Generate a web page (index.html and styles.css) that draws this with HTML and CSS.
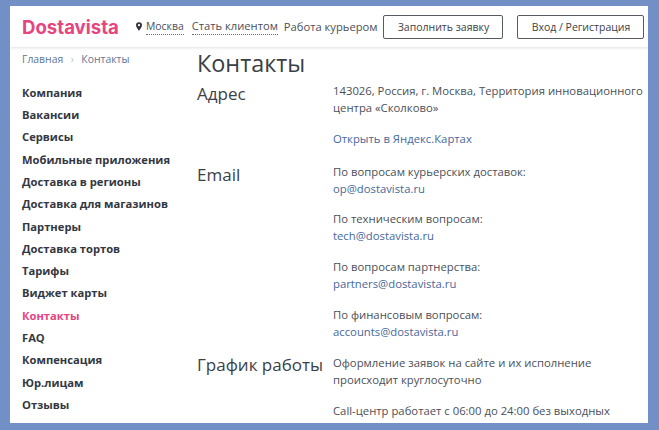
FILE: index.html
```html
<!DOCTYPE html>
<html lang="ru">
<head>
<meta charset="utf-8">
<title>Контакты</title>
<link rel="stylesheet" href="styles.css">
</head>
<body>
<div class="window">
  <header class="header">
    <a class="logo">Dostavista</a>
    <svg class="pin" width="6" height="9" viewBox="0 0 7 10"><path fill-rule="evenodd" d="M3.5 0A3.4 3.4 0 0 0 0 3.4C0 5.6 3.5 10 3.5 10S7 5.6 7 3.4A3.4 3.4 0 0 0 3.5 0Zm0 2.1a1.3 1.3 0 1 1 0 2.6 1.3 1.3 0 0 1 0-2.6Z" fill="#33373f"/></svg>
    <a class="hlink dotted city">Москва</a>
    <a class="hlink dotted client">Стать клиентом</a>
    <a class="hlink courier">Работа курьером</a>
    <a class="btn btn-order">Заполнить заявку</a>
    <a class="btn btn-login">Вход / Регистрация</a>
  </header>
  <div class="page">
    <aside class="side">
      <div class="crumbs"><span>Главная</span><span class="sep">›</span><span>Контакты</span></div>
      <nav class="nav">
        <a>Компания</a>
        <a>Вакансии</a>
        <a>Сервисы</a>
        <a>Мобильные приложения</a>
        <a>Доставка в регионы</a>
        <a>Доставка для магазинов</a>
        <a>Партнеры</a>
        <a>Доставка тортов</a>
        <a>Тарифы</a>
        <a>Виджет карты</a>
        <a class="active">Контакты</a>
        <a>FAQ</a>
        <a>Компенсация</a>
        <a>Юр.лицам</a>
        <a>Отзывы</a>
      </nav>
    </aside>
    <main class="main">
      <h1 class="title">Контакты</h1>
      <section class="row row-address">
        <h2 class="label">Адрес</h2>
        <div class="info">
          <p>143026, Россия, г. Москва, Территория инновационного центра «Сколково»</p>
          <p><a class="link">Открыть в Яндекс.Картах</a></p>
        </div>
      </section>
      <section class="row row-email">
        <h2 class="label">Email</h2>
        <div class="info">
          <p>По вопросам курьерских доставок:<br><a class="link">op@dostavista.ru</a></p>
          <p>По техническим вопросам:<br><a class="link">tech@dostavista.ru</a></p>
          <p>По вопросам партнерства:<br><a class="link">partners@dostavista.ru</a></p>
          <p>По финансовым вопросам:<br><a class="link">accounts@dostavista.ru</a></p>
        </div>
      </section>
      <section class="row row-hours">
        <h2 class="label">График работы</h2>
        <div class="info">
          <p>Оформление заявок на сайте и их исполнение происходит круглосуточно</p>
          <p>Call-центр работает с 06:00 до 24:00 без выходных</p>
        </div>
      </section>
    </main>
  </div>
</div>
</body>
</html>
```
FILE: styles.css
```css
* { box-sizing: border-box; }
html, body { margin: 0; height: 100%; overflow: hidden; }
body {
  background: #7390c6;
  padding: 6px 11px 7px 10px;
  font-family: "Open Sans", sans-serif;
  color: #3b3f47;
}
.window { background: #fff; height: 417px; overflow: hidden; }
.header {
  display: flex;
  align-items: center;
  height: 41px;
  padding-left: 12px;
  box-shadow: 0 1px 3px rgba(0, 0, 0, .12);
  position: relative;
}
.logo {
  font-family: "Inter", sans-serif;
  font-weight: 700;
  font-size: 18.6px;
  color: #e6457f;
  width: 114px;
}
.pin { margin-right: 4px; }
.hlink { font-size: 11.2px; line-height: 16px; color: #4b4f58; white-space: nowrap; }
.dotted { border-bottom: 1px dotted #666b75; }
.city { font-size: 10.4px; margin-right: 8px; }
.client { margin-right: 6px; }
.courier { margin-right: 6px; }
.btn {
  display: flex;
  align-items: center;
  justify-content: center;
  height: 24px;
  border: 1px solid #555a63;
  border-radius: 2px;
  font-size: 10.5px;
  color: #3b3f47;
  white-space: nowrap;
}
.btn-order { width: 120px; margin-right: 14px; }
.btn-login { width: 127px; }
.page { display: flex; padding: 0 0 0 12px; }
.side { width: 175px; flex: none; }
.crumbs {
  display: flex;
  gap: 7.5px;
  padding-top: 5px;
  height: 34.8px;
  font-size: 10.4px;
  line-height: 15px;
  color: #5f7596;
}
.sep { color: #b9c0cc; }
.nav { display: flex; flex-direction: column; }
.nav a {
  font-size: 11.2px;
  font-weight: 700;
  line-height: 22.3px;
  color: #33373f;
}
.nav a.active { color: #e6457f; }
.main { flex: 1; min-width: 0; }
.title {
  margin: 0;
  font-size: 23.4px;
  font-weight: 400;
  line-height: 33px;
  color: #3b3f47;
}
.row { display: flex; }
.label {
  margin: 1px 0 0;
  width: 136px;
  flex: none;
  font-size: 17px;
  font-weight: 400;
  line-height: 24px;
  color: #3b3f47;
  white-space: nowrap;
}
.info { width: 316px; font-size: 11.3px; line-height: 17px; color: #4b4f58; }
.info p { margin: 0 0 13.9px; }
.link { color: #47689c; }
.row-address { height: 82px; padding-top: 1px; }
.row-address .info { padding-top: 1px; }
.row-email { height: 191px; }
.row-email .info { margin-top: .5px; }
.row-hours .label { margin-top: 0; }
.row-hours .info { padding-top: 1px; }
.row-hours p { margin-bottom: 14px; }
```
